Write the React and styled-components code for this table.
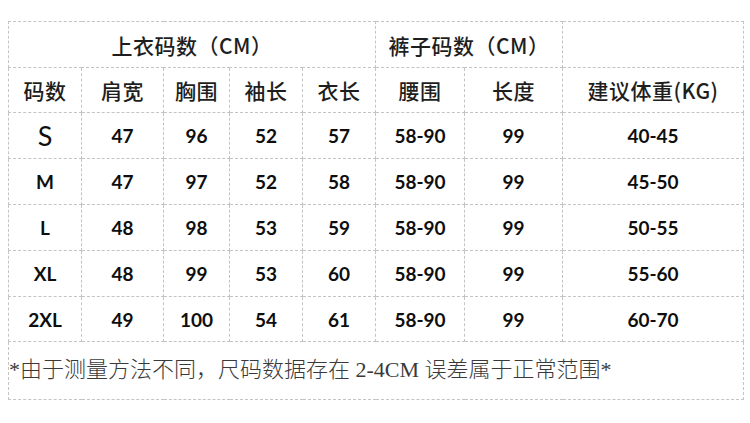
import React from 'react';
import styled, { createGlobalStyle } from 'styled-components';

const GlobalStyle = createGlobalStyle`
  html, body {
    margin: 0;
    padding: 0;
    background: #ffffff;
  }
`;

const Page = styled.div`
  width: 750px;
  height: 423px;
  padding: 21px 0 0 8px;
  box-sizing: border-box;
  background: #ffffff;
`;

const Table = styled.table`
  width: 735px;
  border-collapse: collapse;
  table-layout: fixed;
`;

const Cell = styled.td`
  border: 1px dashed #c4c4c4;
  height: ${(p) => p.$h || 44}px;
  padding: 0;
  text-align: center;
  vertical-align: middle;
  color: #141414;
`;

const HeadCell = styled(Cell)`
  font-family: "Noto Sans CJK SC", "Noto Sans", sans-serif;
  font-size: 21px;
  font-weight: 500;
  color: #1e1e1e;
  letter-spacing: 0.5px;
`;

const NumCell = styled(Cell)`
  font-family: Lato, "Liberation Sans", sans-serif;
  font-size: 19px;
  font-weight: 700;
  color: #0e0e0e;
`;

const SizeCell = styled(NumCell)`
  font-size: ${(p) => (p.$big ? 27 : 19)}px;
  font-weight: ${(p) => (p.$big ? 400 : 700)};
`;

const NoteCell = styled(Cell)`
  text-align: left;
  padding: 0 0 8px 0;
  font-family: "Liberation Serif", "Noto Sans CJK SC", serif;
  font-weight: 300;
  font-size: 22px;
  color: #3a3a3a;
  white-space: nowrap;
`;

const widths = [73, 82, 66, 73, 73, 89, 98, 181];

const rows = [
  ['S', '47', '96', '52', '57', '58-90', '99', '40-45'],
  ['M', '47', '97', '52', '58', '58-90', '99', '45-50'],
  ['L', '48', '98', '53', '59', '58-90', '99', '50-55'],
  ['XL', '48', '99', '53', '60', '58-90', '99', '55-60'],
  ['2XL', '49', '100', '54', '61', '58-90', '99', '60-70'],
];

const heads = ['码数', '肩宽', '胸围', '袖长', '衣长', '腰围', '长度', '建议体重(KG)'];

export default function App() {
  return (
    <Page>
      <GlobalStyle />
      <Table>
        <colgroup>
          {widths.map((w, i) => (
            <col key={i} style={{ width: w }} />
          ))}
        </colgroup>
        <tbody>
          <tr>
            <HeadCell colSpan={5} $h={45}>上衣码数（CM）</HeadCell>
            <HeadCell colSpan={2} $h={45}>裤子码数（CM）</HeadCell>
            <HeadCell $h={45} />
          </tr>
          <tr>
            {heads.map((h) => (
              <HeadCell key={h} $h={44}>{h}</HeadCell>
            ))}
          </tr>
          {rows.map((r, ri) => (
            <tr key={r[0]}>
              <SizeCell $h={ri === 4 ? 44 : 45} $big={r[0] === 'S'}>{r[0]}</SizeCell>
              {r.slice(1).map((v, i) => (
                <NumCell key={i} $h={ri === 4 ? 44 : 45}>{v}</NumCell>
              ))}
            </tr>
          ))}
          <tr>
            <NoteCell colSpan={8} $h={49}>
              *由于测量方法不同，尺码数据存在 2-4CM 误差属于正常范围*
            </NoteCell>
          </tr>
        </tbody>
      </Table>
    </Page>
  );
}
